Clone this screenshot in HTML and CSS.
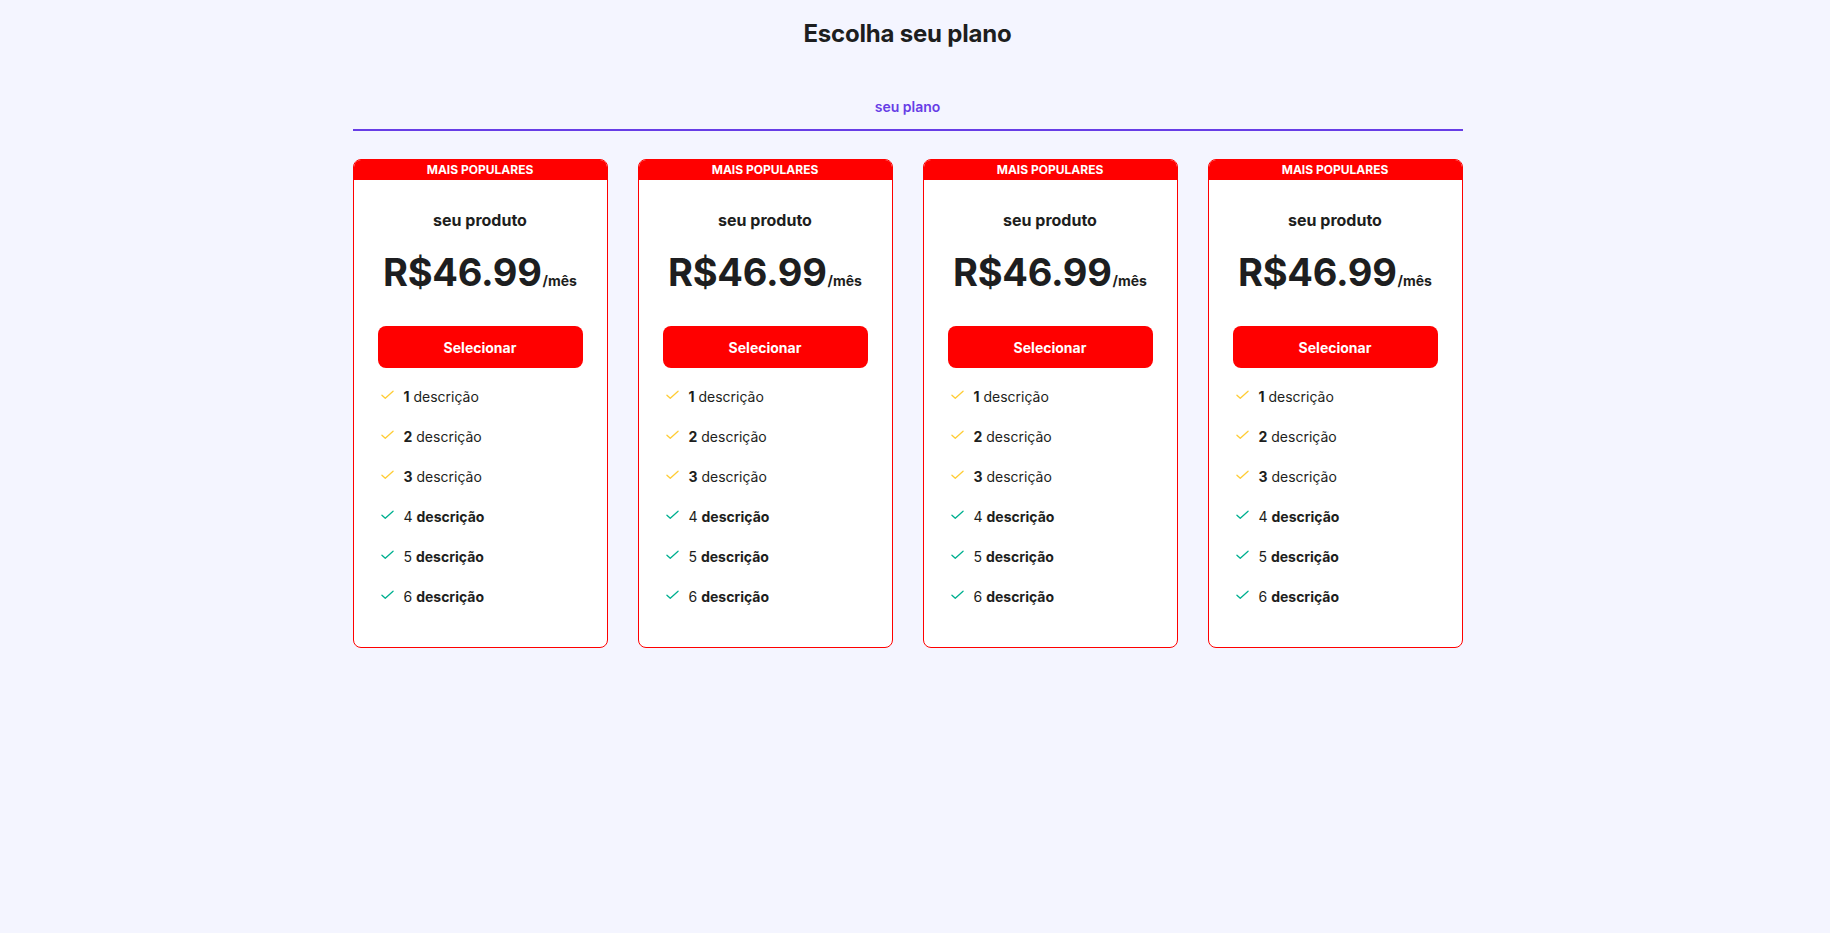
FILE: index.html
```html
<!DOCTYPE html>
<html lang="pt-BR">
<head>
<meta charset="utf-8">
<title>Escolha seu plano</title>
<link rel="stylesheet" href="styles.css">
</head>
<body>
<div class="viewport">
  <main class="page">
    <h1 class="title">Escolha seu plano</h1>
    <nav class="tabs">
      <span class="tab tab-active">seu plano</span>
    </nav>
    <section class="plans">
      <article class="card">
        <div class="badge">MAIS POPULARES</div>
        <div class="card-body">
          <h2 class="product">seu produto</h2>
          <div class="price"><span class="amount">R$46.99</span><span class="period">/mês</span></div>
          <button class="select">Selecionar</button>
          <ul class="features">
            <li class="feat feat-y"><svg class="check" viewBox="0 0 14 10"><path d="M1 5.2 L4.6 8.6 L13 1"/></svg><span><b>1</b> descrição</span></li>
            <li class="feat feat-y"><svg class="check" viewBox="0 0 14 10"><path d="M1 5.2 L4.6 8.6 L13 1"/></svg><span><b>2</b> descrição</span></li>
            <li class="feat feat-y"><svg class="check" viewBox="0 0 14 10"><path d="M1 5.2 L4.6 8.6 L13 1"/></svg><span><b>3</b> descrição</span></li>
            <li class="feat feat-g"><svg class="check" viewBox="0 0 14 10"><path d="M1 5.2 L4.6 8.6 L13 1"/></svg><span>4 <b>descrição</b></span></li>
            <li class="feat feat-g"><svg class="check" viewBox="0 0 14 10"><path d="M1 5.2 L4.6 8.6 L13 1"/></svg><span>5 <b>descrição</b></span></li>
            <li class="feat feat-g"><svg class="check" viewBox="0 0 14 10"><path d="M1 5.2 L4.6 8.6 L13 1"/></svg><span>6 <b>descrição</b></span></li>
          </ul>
        </div>
      </article>
      <article class="card">
        <div class="badge">MAIS POPULARES</div>
        <div class="card-body">
          <h2 class="product">seu produto</h2>
          <div class="price"><span class="amount">R$46.99</span><span class="period">/mês</span></div>
          <button class="select">Selecionar</button>
          <ul class="features">
            <li class="feat feat-y"><svg class="check" viewBox="0 0 14 10"><path d="M1 5.2 L4.6 8.6 L13 1"/></svg><span><b>1</b> descrição</span></li>
            <li class="feat feat-y"><svg class="check" viewBox="0 0 14 10"><path d="M1 5.2 L4.6 8.6 L13 1"/></svg><span><b>2</b> descrição</span></li>
            <li class="feat feat-y"><svg class="check" viewBox="0 0 14 10"><path d="M1 5.2 L4.6 8.6 L13 1"/></svg><span><b>3</b> descrição</span></li>
            <li class="feat feat-g"><svg class="check" viewBox="0 0 14 10"><path d="M1 5.2 L4.6 8.6 L13 1"/></svg><span>4 <b>descrição</b></span></li>
            <li class="feat feat-g"><svg class="check" viewBox="0 0 14 10"><path d="M1 5.2 L4.6 8.6 L13 1"/></svg><span>5 <b>descrição</b></span></li>
            <li class="feat feat-g"><svg class="check" viewBox="0 0 14 10"><path d="M1 5.2 L4.6 8.6 L13 1"/></svg><span>6 <b>descrição</b></span></li>
          </ul>
        </div>
      </article>
      <article class="card">
        <div class="badge">MAIS POPULARES</div>
        <div class="card-body">
          <h2 class="product">seu produto</h2>
          <div class="price"><span class="amount">R$46.99</span><span class="period">/mês</span></div>
          <button class="select">Selecionar</button>
          <ul class="features">
            <li class="feat feat-y"><svg class="check" viewBox="0 0 14 10"><path d="M1 5.2 L4.6 8.6 L13 1"/></svg><span><b>1</b> descrição</span></li>
            <li class="feat feat-y"><svg class="check" viewBox="0 0 14 10"><path d="M1 5.2 L4.6 8.6 L13 1"/></svg><span><b>2</b> descrição</span></li>
            <li class="feat feat-y"><svg class="check" viewBox="0 0 14 10"><path d="M1 5.2 L4.6 8.6 L13 1"/></svg><span><b>3</b> descrição</span></li>
            <li class="feat feat-g"><svg class="check" viewBox="0 0 14 10"><path d="M1 5.2 L4.6 8.6 L13 1"/></svg><span>4 <b>descrição</b></span></li>
            <li class="feat feat-g"><svg class="check" viewBox="0 0 14 10"><path d="M1 5.2 L4.6 8.6 L13 1"/></svg><span>5 <b>descrição</b></span></li>
            <li class="feat feat-g"><svg class="check" viewBox="0 0 14 10"><path d="M1 5.2 L4.6 8.6 L13 1"/></svg><span>6 <b>descrição</b></span></li>
          </ul>
        </div>
      </article>
      <article class="card">
        <div class="badge">MAIS POPULARES</div>
        <div class="card-body">
          <h2 class="product">seu produto</h2>
          <div class="price"><span class="amount">R$46.99</span><span class="period">/mês</span></div>
          <button class="select">Selecionar</button>
          <ul class="features">
            <li class="feat feat-y"><svg class="check" viewBox="0 0 14 10"><path d="M1 5.2 L4.6 8.6 L13 1"/></svg><span><b>1</b> descrição</span></li>
            <li class="feat feat-y"><svg class="check" viewBox="0 0 14 10"><path d="M1 5.2 L4.6 8.6 L13 1"/></svg><span><b>2</b> descrição</span></li>
            <li class="feat feat-y"><svg class="check" viewBox="0 0 14 10"><path d="M1 5.2 L4.6 8.6 L13 1"/></svg><span><b>3</b> descrição</span></li>
            <li class="feat feat-g"><svg class="check" viewBox="0 0 14 10"><path d="M1 5.2 L4.6 8.6 L13 1"/></svg><span>4 <b>descrição</b></span></li>
            <li class="feat feat-g"><svg class="check" viewBox="0 0 14 10"><path d="M1 5.2 L4.6 8.6 L13 1"/></svg><span>5 <b>descrição</b></span></li>
            <li class="feat feat-g"><svg class="check" viewBox="0 0 14 10"><path d="M1 5.2 L4.6 8.6 L13 1"/></svg><span>6 <b>descrição</b></span></li>
          </ul>
        </div>
      </article>
    </section>
  </main>
</div>
</body>
</html>
```

FILE: styles.css
```css
* { box-sizing: border-box; }

html, body {
  margin: 0;
  padding: 0;
  background: #f4f5ff;
}

body {
  font-family: "Inter", "Noto Sans", "DejaVu Sans", sans-serif;
  color: #1d1e20;
  min-height: 933px;
}

.viewport {
  padding-right: 15px;
}

.page {
  width: 1110px;
  margin: 0 auto;
  display: flex;
  flex-direction: column;
}

.title {
  margin: 18px 0 0;
  font-size: 24px;
  line-height: 32px;
  font-weight: 700;
  text-align: center;
  letter-spacing: -0.2px;
}

.tabs {
  margin-top: 47px;
  display: flex;
  justify-content: center;
  border-bottom: 2px solid #673de6;
}

.tab {
  font-size: 14px;
  line-height: 20px;
  font-weight: 600;
  color: #673de6;
  padding: 0 0 12px;
}

.plans {
  margin-top: 28px;
  display: grid;
  grid-template-columns: repeat(4, 1fr);
  gap: 30px;
}

.card {
  background: #ffffff;
  border: 1px solid #ff0000;
  border-radius: 8px;
  overflow: hidden;
  display: flex;
  flex-direction: column;
}

.badge {
  background: #ff0000;
  color: #ffffff;
  font-size: 12px;
  line-height: 20px;
  font-weight: 700;
  text-align: center;
}

.card-body {
  padding: 28px 24px 38px;
  display: flex;
  flex-direction: column;
}

.product {
  margin: 0;
  font-size: 16px;
  line-height: 24px;
  font-weight: 700;
  text-align: center;
}

.price {
  margin-top: 14px;
  display: flex;
  justify-content: center;
  align-items: baseline;
}

.amount {
  font-size: 38px;
  line-height: 52px;
  font-weight: 700;
  letter-spacing: -0.3px;
}

.period {
  font-size: 14px;
  font-weight: 700;
  margin-left: 1px;
}

.select {
  margin-top: 28px;
  height: 42px;
  border: 0;
  border-radius: 8px;
  background: #ff0000;
  color: #ffffff;
  font-family: inherit;
  font-size: 14px;
  font-weight: 700;
  cursor: pointer;
}

.features {
  list-style: none;
  margin: 17px 0 0;
  padding: 0 0 0 3px;
  display: flex;
  flex-direction: column;
  gap: 16px;
}

.feat {
  display: flex;
  align-items: flex-start;
  gap: 10px;
  font-size: 14px;
  line-height: 24px;
}

.feat b { font-weight: 700; }

.check {
  width: 13px;
  height: 10px;
  margin-top: 5px;
  fill: none;
  stroke-width: 1.4;
  stroke-linecap: round;
  stroke-linejoin: round;
}

.feat-y .check { stroke: #ffcd35; }
.feat-g .check { stroke: #00b090; }
```
